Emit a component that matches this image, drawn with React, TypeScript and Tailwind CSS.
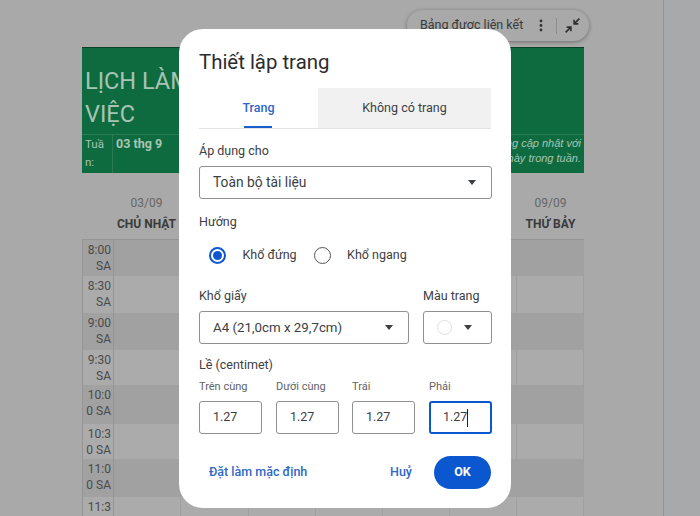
import React from "react";

const rows: [string, string, string][] = [
  ["8:00", "SA", "h-[36px] bg-[#a1a1a1]"],
  ["8:30", "SA", "h-[37px] bg-[#ababab]"],
  ["9:00", "SA", "h-[37px] bg-[#a1a1a1]"],
  ["9:30", "SA", "h-[35px] bg-[#ababab]"],
  ["10:0", "0 SA", "h-[39px] bg-[#a1a1a1]"],
  ["10:3", "0 SA", "h-[35px] bg-[#ababab]"],
  ["11:0", "0 SA", "h-[38px] bg-[#a1a1a1]"],
  ["11:3", "", "h-[38px] bg-[#ababab]"],
];
const colW = ["w-[67px]", "w-[68px]", "w-[67px]", "w-[67px]", "w-[67px]", "w-[67px]", "w-[67px]"];

function Caret() {
  return <span className="block w-0 h-0 border-x-[4px] border-x-transparent border-t-[5px] border-t-[#3c4043]" />;
}

function Radio({ on, label }: { on?: boolean; label: string }) {
  return (
    <div className="flex items-center gap-[16.5px]">
      <span className={`flex items-center justify-center w-[17px] h-[17px] rounded-full ${on ? "border-2 border-[#0b57d0]" : "border-[1.5px] border-[#555]"}`}>
        {on && <span className="w-[9px] h-[9px] rounded-full bg-[#0b57d0]" />}
      </span>
      <span className="text-[12.5px] text-[#3c4043]">{label}</span>
    </div>
  );
}

function Margin({ label, w, focus }: { label: string; w: string; focus?: boolean }) {
  return (
    <div className={w}>
      <div className="text-[11px] leading-[14px] text-[#5f6368] mb-[7px]">{label}</div>
      <div className={`h-[33px] w-[63px] rounded-[3px] flex items-center text-[12.5px] text-[#3c4043] ${focus ? "border-2 border-[#0b57d0] pl-[12px]" : "border border-[#8f9092] pl-[13px]"}`}>
        1.27{focus && <span className="w-px h-[18px] bg-[#1f1f1f]" />}
      </div>
    </div>
  );
}

export default function App() {
  return (
    <div className="relative w-[700px] h-[516px] overflow-hidden bg-[#a9a9a9] font-['Roboto','Liberation_Sans',sans-serif]">
      <div className="flex h-full">
        <div className="w-[664px] h-full border-r border-[#959597] pl-[82px] pt-[10px] flex flex-col overflow-hidden">
          <div className="h-[37px] shrink-0 flex">
            <div className="w-[182px] h-[31px] ml-[325px] rounded-full bg-[#a9a9a9] shadow-[0_1px_4px_rgba(0,0,0,0.35)] flex items-center pl-[13px] text-[12.5px] text-[#3a3a3a]">
              <span>Bảng được liên kết</span>
              <svg width="4" height="13" viewBox="0 0 4 13" className="ml-[16px]" fill="#333"><circle cx="2" cy="2" r="1.4"/><circle cx="2" cy="6.5" r="1.4"/><circle cx="2" cy="11" r="1.4"/></svg>
              <span className="w-px h-[16px] bg-[#8d8d8d] ml-[13px]" />
              <svg width="17" height="17" viewBox="0 0 16 16" className="ml-[7px]" fill="none" stroke="#2f2f2f" strokeWidth="1.5"><path d="M14.5 1.5 9.5 6.5M9.5 2.5v4h4M6.5 9.5l-5 5M2.5 9.5h4v4" /></svg>
            </div>
          </div>
          <div className="w-[502px] h-[126px] shrink-0 bg-[#0d6b3f] border-t border-[#0a3f28] text-[#a9c4b4]">
            <div className="h-[87px] pl-[3px] pt-[17px] text-[23.5px] leading-[33px] border-b border-[#2a7a53]">
              <div>LỊCH LÀM</div>
              <div>VIỆC</div>
            </div>
            <div className="flex h-[38px] text-[11.5px] leading-[18px]">
              <div className="w-[31px] pl-[3px] border-r border-[#2a7a53]">Tuầ<br />n:</div>
              <div className="pl-[3px] text-[12.5px] font-bold">03 thg 9</div>
              <div className="ml-auto pr-[3px] text-[11px] leading-[15px] pt-[1px] italic text-right font-['Liberation_Sans',sans-serif]">
                Lịch sẽ tự động cập nhật với<br />các ngày này trong tuần.
              </div>
            </div>
          </div>
          <div className="flex w-[502px] shrink-0 pl-[31px] h-[66px] pt-[20px] text-center">
            <div className="w-[67px]">
              <div className="text-[12px] leading-[20px] text-[#666]">03/09</div>
              <div className="text-[12px] leading-[22px] font-bold text-[#3a3a3a] whitespace-nowrap">CHỦ NHẬT</div>
            </div>
            <div className="flex-1" />
            <div className="w-[67px]">
              <div className="text-[12px] leading-[20px] text-[#666]">09/09</div>
              <div className="text-[12px] leading-[22px] font-bold text-[#3a3a3a] whitespace-nowrap">THỨ BẢY</div>
            </div>
          </div>
          <div className="w-[502px] shrink-0 border-t border-l border-[#959595]">
            {rows.map(([a, b, cls]) => (
              <div key={a} className={`flex ${cls}`}>
                <div className="w-[31px] shrink-0 border-r border-[#959595] text-right pr-[2px] pt-[2px] text-[12px] leading-[16px] text-[#4a4a4a]">
                  {a}{b && <br />}{b}
                </div>
                {colW.map((w, i) => (
                  <div key={i} className={`${w} shrink-0 border-r border-[#a0a0a0]`} />
                ))}
              </div>
            ))}
          </div>
        </div>
        <div className="flex-1 bg-[#a8a9ab]" />
      </div>

      <div className="absolute left-[179px] top-[29px] w-[332px] h-[479px] bg-white rounded-[24px] pl-[20px] pr-[19px] text-[#3c4043]">
        <div className="pt-[19px] text-[20.4px] leading-[28px] text-[#2b2c2e]">Thiết lập trang</div>
        <div className="mt-[12px] flex h-[41px] mr-px border-b border-[#e3e3e3]">
          <div className="relative w-[119px] flex items-center justify-center text-[12.5px] font-medium text-[#2f67c9]">
            Trang
            <span className="absolute bottom-0 left-[45px] w-[28px] h-[2px] bg-[#1a5fcc]" />
          </div>
          <div className="flex-1 flex items-center justify-center bg-[#f1f1f1] text-[12.5px] text-[#3c4043]">Không có trang</div>
        </div>

        <div className="mt-[13px] text-[12.5px] leading-[18px]">Áp dụng cho</div>
        <div className="mt-[6px] h-[33px] border border-[#8f9092] rounded-[3px] flex items-center justify-between pl-[13px] pr-[15px] text-[13.8px]">
          <span>Toàn bộ tài liệu</span>
          <Caret />
        </div>

        <div className="mt-[14px] text-[12.5px] leading-[18px]">Hướng</div>
        <div className="mt-[14px] flex pl-[10px] gap-[17px] h-[20px] items-center">
          <Radio on label="Khổ đứng" />
          <Radio label="Khổ ngang" />
        </div>

        <div className="mt-[22px] flex gap-[14px]">
          <div className="w-[210px]">
            <div className="text-[12.5px] leading-[18px]">Khổ giấy</div>
            <div className="mt-[6px] h-[33px] border border-[#8f9092] rounded-[3px] flex items-center justify-between pl-[13px] pr-[15px] text-[13.3px]">
              <span>A4 (21,0cm x 29,7cm)</span>
              <Caret />
            </div>
          </div>
          <div className="w-[69px]">
            <div className="text-[12.5px] leading-[18px]">Màu trang</div>
            <div className="mt-[6px] h-[33px] border border-[#8f9092] rounded-[3px] flex items-center pl-[13px] gap-[12px]">
              <span className="w-[15px] h-[15px] rounded-full border border-[#e0e0e0]" />
              <Caret />
            </div>
          </div>
        </div>

        <div className="mt-[12px] text-[12.5px] leading-[18px]">Lề (centimet)</div>
        <div className="mt-[6px] flex">
          <Margin label="Trên cùng" w="w-[77px]" />
          <Margin label="Dưới cùng" w="w-[76px]" />
          <Margin label="Trái" w="w-[77px]" />
          <Margin label="Phải" w="w-[63px]" focus />
        </div>

        <div className="mt-[22px] mr-px flex items-center h-[33px] text-[12.5px] font-medium text-[#2f67c9]">
          <span className="ml-[10px]">Đặt làm mặc định</span>
          <span className="ml-auto">Huỷ</span>
          <span className="ml-[22px] w-[57px] h-[33px] rounded-full bg-[#0b57d0] text-white flex items-center justify-center font-bold">OK</span>
        </div>
      </div>
    </div>
  );
}
